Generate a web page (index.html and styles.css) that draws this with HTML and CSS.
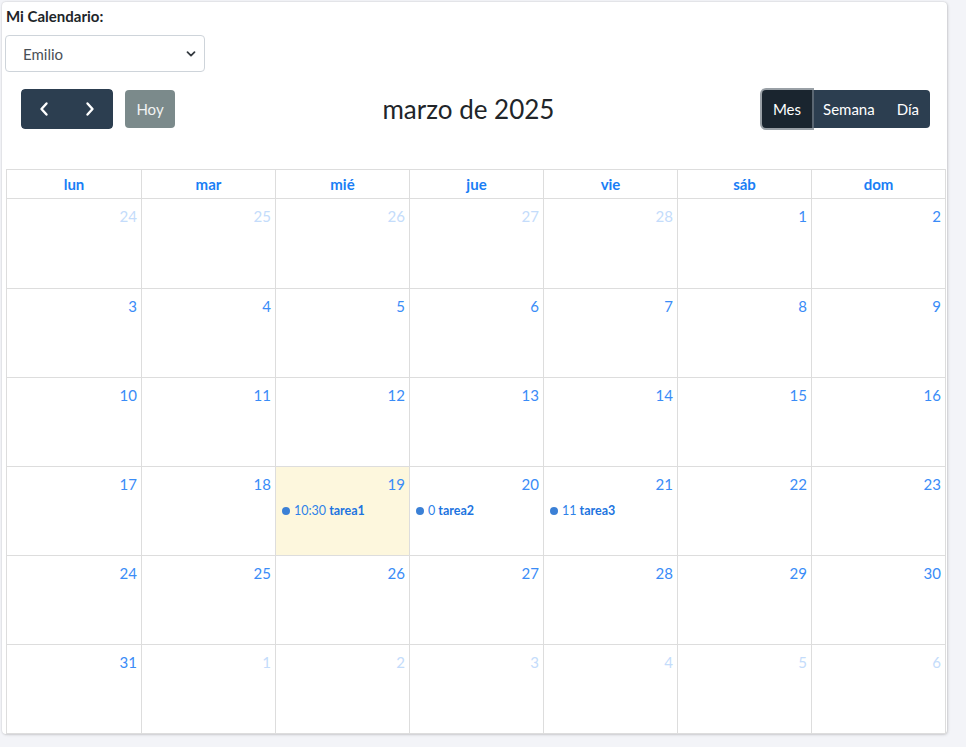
FILE: index.html
```html
<!DOCTYPE html>
<html lang="es">
<head>
<meta charset="utf-8">
<title>Mi Calendario</title>
<link rel="stylesheet" href="styles.css">
</head>
<body>
<div class="card">
  <div class="picker">
    <label class="label">Mi Calendario:</label>
    <div class="select">
      <span>Emilio</span>
      <svg class="caret" width="10" height="8" viewBox="0 0 10 8"><path d="M1.5 2.2 L5 5.6 L8.5 2.2" fill="none" stroke="#343a40" stroke-width="1.8" stroke-linecap="round" stroke-linejoin="round"/></svg>
    </div>
  </div>
  <div class="toolbar">
    <div class="left">
      <div class="btn-group nav">
        <button class="btn dark"><svg width="12" height="16" viewBox="0 0 12 16"><path d="M8.5 2.5 L3.5 8 L8.5 13.5" fill="none" stroke="#fff" stroke-width="2.4" stroke-linecap="round" stroke-linejoin="round"/></svg></button>
        <button class="btn dark"><svg width="12" height="16" viewBox="0 0 12 16"><path d="M3.5 2.5 L8.5 8 L3.5 13.5" fill="none" stroke="#fff" stroke-width="2.4" stroke-linecap="round" stroke-linejoin="round"/></svg></button>
      </div>
      <button class="btn today">Hoy</button>
    </div>
    <h2 class="title">marzo de 2025</h2>
    <div class="btn-group views">
      <button class="btn dark active">Mes</button>
      <button class="btn dark">Semana</button>
      <button class="btn dark">Día</button>
    </div>
  </div>
  <div class="cal">
    <div class="head">
      <div>lun</div><div>mar</div><div>mié</div><div>jue</div><div>vie</div><div>sáb</div><div>dom</div>
    </div>
    <div class="grid">
      <div class="day other"><span class="num">24</span></div>
      <div class="day other"><span class="num">25</span></div>
      <div class="day other"><span class="num">26</span></div>
      <div class="day other"><span class="num">27</span></div>
      <div class="day other"><span class="num">28</span></div>
      <div class="day"><span class="num">1</span></div>
      <div class="day"><span class="num">2</span></div>

      <div class="day"><span class="num">3</span></div>
      <div class="day"><span class="num">4</span></div>
      <div class="day"><span class="num">5</span></div>
      <div class="day"><span class="num">6</span></div>
      <div class="day"><span class="num">7</span></div>
      <div class="day"><span class="num">8</span></div>
      <div class="day"><span class="num">9</span></div>

      <div class="day"><span class="num">10</span></div>
      <div class="day"><span class="num">11</span></div>
      <div class="day"><span class="num">12</span></div>
      <div class="day"><span class="num">13</span></div>
      <div class="day"><span class="num">14</span></div>
      <div class="day"><span class="num">15</span></div>
      <div class="day"><span class="num">16</span></div>

      <div class="day"><span class="num">17</span></div>
      <div class="day"><span class="num">18</span></div>
      <div class="day today-cell"><span class="num">19</span>
        <div class="event"><i class="dot"></i><span class="time">10:30</span> <b>tarea1</b></div>
      </div>
      <div class="day"><span class="num">20</span>
        <div class="event"><i class="dot"></i><span class="time">0</span> <b>tarea2</b></div>
      </div>
      <div class="day"><span class="num">21</span>
        <div class="event"><i class="dot"></i><span class="time">11</span> <b>tarea3</b></div>
      </div>
      <div class="day"><span class="num">22</span></div>
      <div class="day"><span class="num">23</span></div>

      <div class="day"><span class="num">24</span></div>
      <div class="day"><span class="num">25</span></div>
      <div class="day"><span class="num">26</span></div>
      <div class="day"><span class="num">27</span></div>
      <div class="day"><span class="num">28</span></div>
      <div class="day"><span class="num">29</span></div>
      <div class="day"><span class="num">30</span></div>

      <div class="day"><span class="num">31</span></div>
      <div class="day other"><span class="num">1</span></div>
      <div class="day other"><span class="num">2</span></div>
      <div class="day other"><span class="num">3</span></div>
      <div class="day other"><span class="num">4</span></div>
      <div class="day other"><span class="num">5</span></div>
      <div class="day other"><span class="num">6</span></div>
    </div>
  </div>
</div>
</body>
</html>
```
FILE: styles.css
```css
* { box-sizing: border-box; }
html, body { margin: 0; padding: 0; }
body {
  background: #f3f4f8;
  font-family: Lato, "Open Sans", "Liberation Sans", sans-serif;
  color: #212529;
  width: 966px;
  height: 747px;
  overflow: hidden;
}
.card {
  margin: 2px 0 0 2px;
  width: 945px;
  height: 732px;
  background: #fff;
  border-radius: 4px;
  box-shadow: 0 0 2px rgba(0,0,0,0.18), 1px 1px 3px rgba(0,0,0,0.12);
  padding: 0 1px 0 4px;
  display: flex;
  flex-direction: column;
}
.picker {
  display: flex;
  flex-direction: column;
  align-items: flex-start;
  padding-top: 5px;
}
.label {
  font-weight: 700;
  font-size: 15px;
  line-height: 18px;
  color: #212529;
}
.select {
  margin-top: 10px;
  margin-left: -1px;
  width: 200px;
  height: 37px;
  border: 1px solid #ced4da;
  border-radius: 4px;
  display: flex;
  align-items: center;
  justify-content: space-between;
  padding: 0 8px 0 17px;
  font-size: 15px;
  color: #495057;
}
.toolbar {
  display: flex;
  align-items: center;
  justify-content: space-between;
  padding: 0 15px 0 15px;
  margin-top: 17px;
  height: 40px;
}
.left { display: flex; align-items: center; gap: 12px; }
.btn {
  font-family: inherit;
  border: 0;
  color: #fff;
  font-size: 15px;
  cursor: pointer;
  display: flex;
  align-items: center;
  justify-content: center;
  padding: 0;
}
.btn-group { display: flex; border-radius: 4px; }
.dark { background: #2c3e50; }
.nav { height: 40px; width: 92px; overflow: hidden; }
.nav .btn { flex: 1; height: 40px; }
.nav .btn:first-child { border-radius: 4px 0 0 4px; }
.nav .btn:last-child { border-radius: 0 4px 4px 0; }
.today {
  background: #7b8a8b;
  height: 38px;
  width: 50px;
  border-radius: 4px;
  color: #f1f3f3;
}
.title {
  margin: 0;
  font-weight: 400;
  font-size: 26px;
  color: #212529;
}
.views { height: 38px; margin-right: 1px; }
.views .btn { height: 38px; padding: 0 11px; }
.views .btn:first-child { border-radius: 4px 0 0 4px; }
.views .btn:last-child { border-radius: 0 4px 4px 0; }
.views .active {
  background: #1a252f;
  box-shadow: 0 0 0 2px rgba(110,120,128,0.7);
  position: relative;
  z-index: 1;
}
.cal {
  margin-top: 40px;
  border: 1px solid #ddd;
  display: flex;
  flex-direction: column;
}
.head {
  display: grid;
  grid-template-columns: repeat(7, 1fr);
  height: 29px;
  border-bottom: 1px solid #ddd;
}
.head div {
  text-align: center;
  font-weight: 700;
  font-size: 15px;
  line-height: 28px;
  color: #1a7ef5;
  border-left: 1px solid #ddd;
}
.head div:first-child { border-left: 0; }
.grid {
  display: grid;
  grid-template-columns: repeat(7, 1fr);
  grid-auto-rows: 89px;
}
.day {
  border-left: 1px solid #ddd;
  border-top: 1px solid #ddd;
  padding: 8px 4px 0 4px;
  display: flex;
  flex-direction: column;
}
.day:nth-child(7n+1) { border-left: 0; }
.day:nth-child(-n+7) { border-top: 0; }
.num {
  align-self: flex-end;
  font-size: 15px;
  line-height: 18px;
  color: #3a8cf7;
}
.other .num { color: #c4dcfb; }
.today-cell { background: #fdf7dd; }
.event {
  margin-top: 10px;
  display: flex;
  align-items: center;
  font-size: 12.5px;
  color: #2e82e8;
  padding-left: 2px;
  white-space: nowrap;
}
.event b { font-weight: 700; color: #1d74e0; margin-left: 3px; }
.dot {
  width: 8px;
  height: 8px;
  border-radius: 50%;
  background: #3b80d6;
  margin-right: 4px;
}
```
